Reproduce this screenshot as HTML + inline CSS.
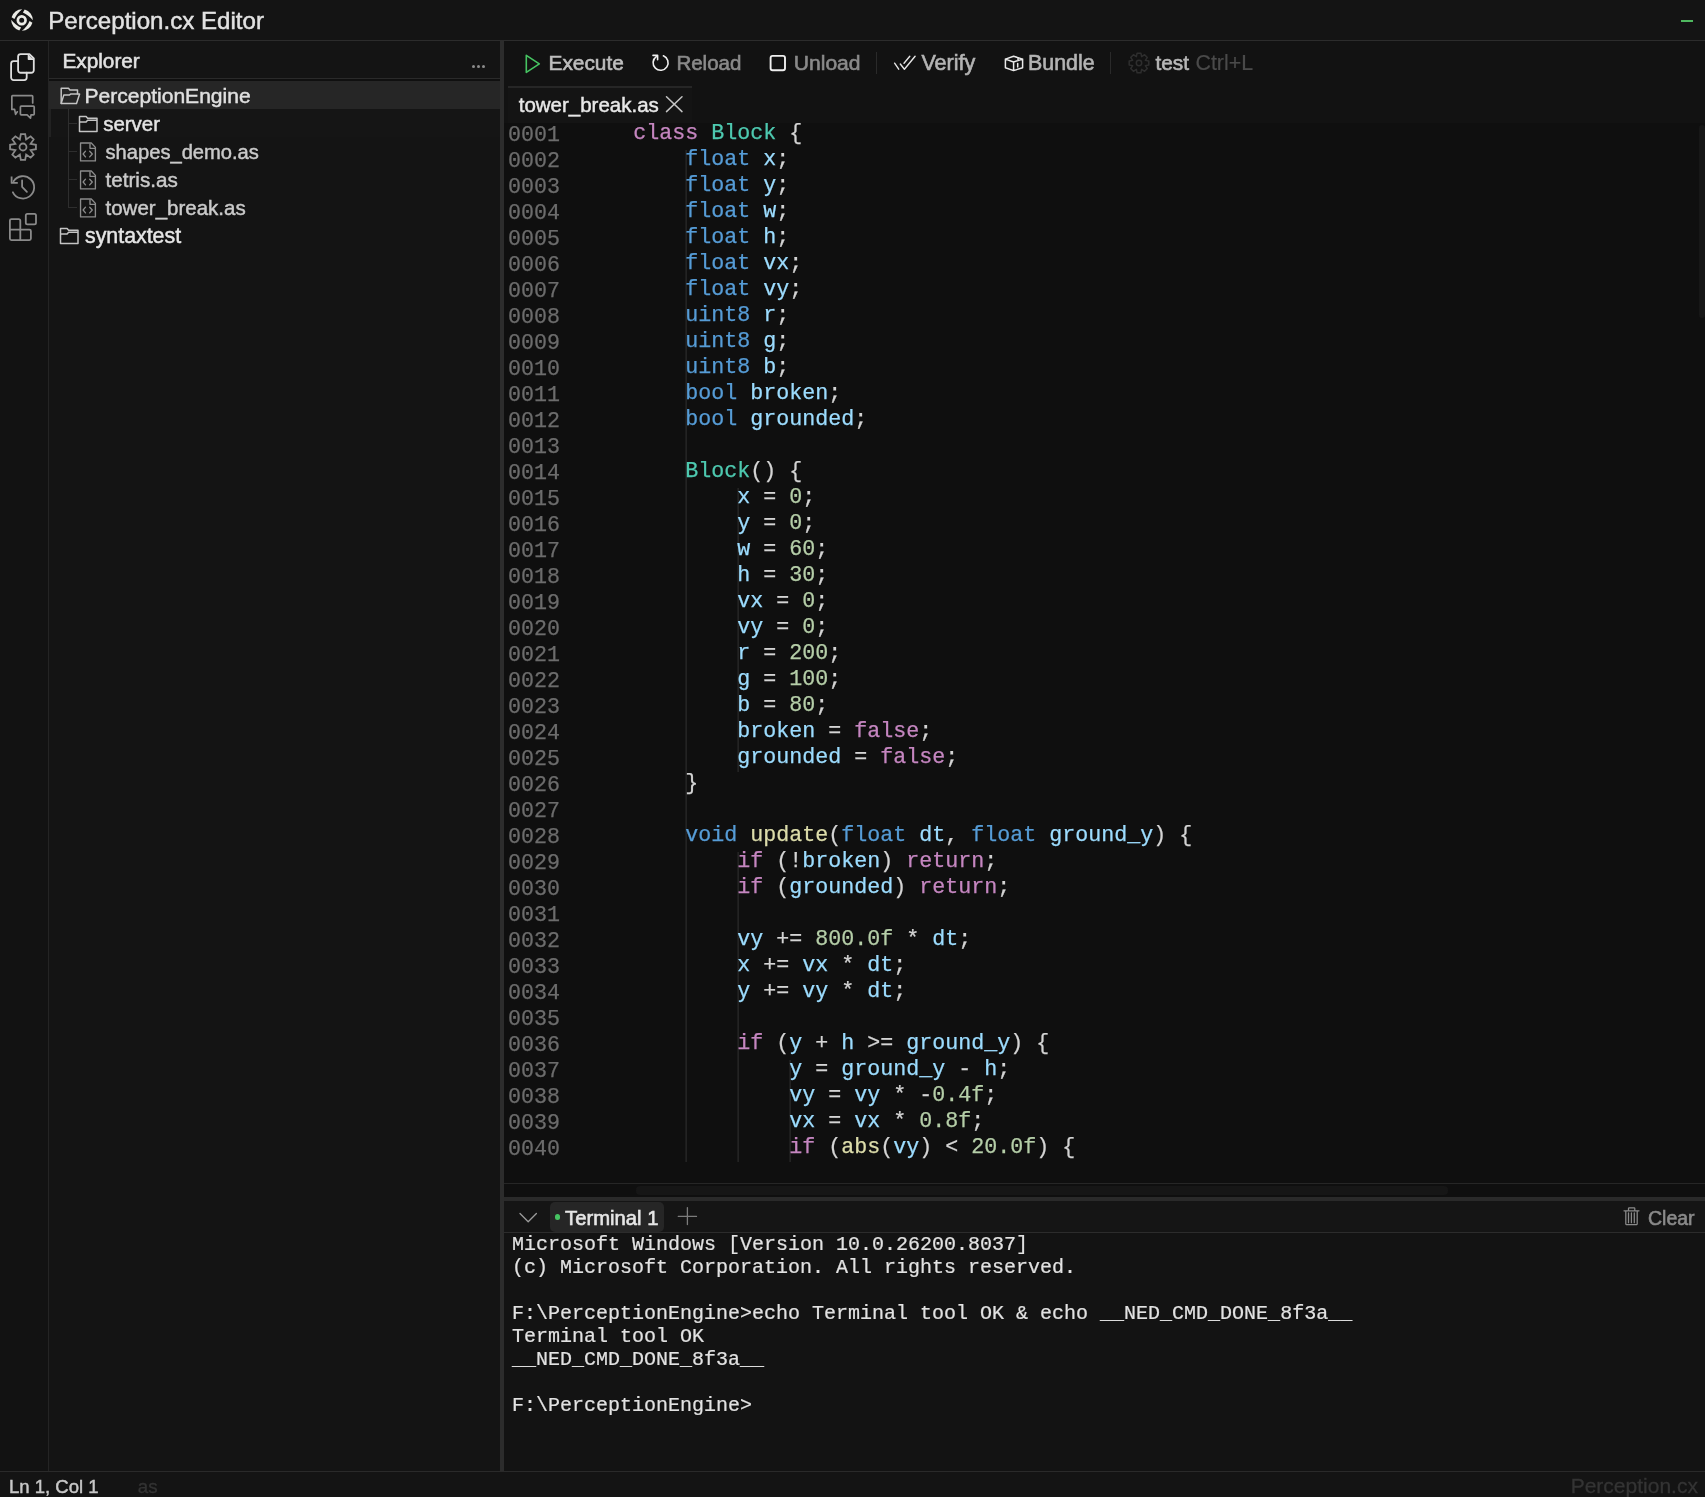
<!DOCTYPE html>
<html><head><meta charset="utf-8">
<style>
*{margin:0;padding:0;box-sizing:border-box}
html,body{width:1705px;height:1497px;overflow:hidden;background:#141414;font-family:"Liberation Sans",sans-serif;-webkit-font-smoothing:antialiased}
#root{position:absolute;left:0;top:0;width:1705px;height:1497px;will-change:transform}
.abs{position:absolute}
.ui{white-space:pre;font-family:"Liberation Sans",sans-serif}
svg{overflow:visible}
.mono{font-family:"Liberation Mono",monospace;font-size:21.67px;line-height:26px;-webkit-text-stroke:0.25px}
.row{position:absolute;left:508px;white-space:pre;height:26px}
.lnum{color:#6c6c6c;white-space:pre}
.k{color:#c586c0}.t{color:#569cd6}.c{color:#4ec9b0}.v{color:#9cdcfe}.n{color:#b5cea8}.p{color:#d4d4d4}.f{color:#dcdcaa}
.term{font-family:"Liberation Mono",monospace;font-size:20px;line-height:23px;color:#e2e2e2;white-space:pre;-webkit-text-stroke:0.2px}
</style></head><body>
<div id="root">
<div class="abs" style="left:0px;top:0px;width:1705px;height:40px;background:#141414;"></div>
<div class="abs" style="left:0px;top:40px;width:1705px;height:1px;background:#2c2c2c;"></div>
<div class="abs" style="left:0px;top:41px;width:48px;height:1430px;background:#121212;"></div>
<div class="abs" style="left:48px;top:41px;width:1px;height:1430px;background:#242424;"></div>
<div class="abs" style="left:500px;top:41px;width:4px;height:1430px;background:#2c2c2c;"></div>
<div class="abs" style="left:504px;top:41px;width:1201px;height:82px;background:#121212;"></div>
<div class="abs" style="left:504px;top:1233px;width:1201px;height:238px;background:#131313;"></div>
<div class="abs" style="left:49px;top:78px;width:451px;height:1px;background:#2a2a2a;"></div>
<div class="abs" style="left:49px;top:79px;width:451px;height:2px;background:#101010;"></div>
<div class="abs" style="left:49px;top:81px;width:451px;height:28px;background:#262626;"></div>
<div class="abs" style="left:51px;top:109px;width:449px;height:28px;background:#151515;"></div>
<div class="abs" style="left:49px;top:109px;width:2px;height:28px;background:#222222;"></div>
<svg class="abs" style="left:11px;top:8.5px" width="22" height="22" viewBox="-11 -11 22 22"><path d="M-10.4 -2.7 A10.8 10.8 0 0 1 0.2 -10.8 Q-5.2 -6.6 -7.6 -0.9 Z" transform="rotate(0)" fill="#ebebe6"/><path d="M-10.4 -2.7 A10.8 10.8 0 0 1 0.2 -10.8 Q-5.2 -6.6 -7.6 -0.9 Z" transform="rotate(90)" fill="#ebebe6"/><path d="M-10.4 -2.7 A10.8 10.8 0 0 1 0.2 -10.8 Q-5.2 -6.6 -7.6 -0.9 Z" transform="rotate(180)" fill="#ebebe6"/><path d="M-10.4 -2.7 A10.8 10.8 0 0 1 0.2 -10.8 Q-5.2 -6.6 -7.6 -0.9 Z" transform="rotate(270)" fill="#ebebe6"/><circle cx="-0.3" cy="0.2" r="3.85" fill="none" stroke="#ebebe6" stroke-width="2.7"/></svg>
<div class="abs ui" style="left:48.30px;top:5.00px;font-size:24.1px;line-height:31px;color:#e2e2e2;-webkit-text-stroke:0.45px #e2e2e2">Perception.cx Editor</div>
<div class="abs" style="left:1681px;top:20px;width:12px;height:2px;background:#4fb85f;"></div>
<svg class="abs" style="left:5px;top:48px" width="36" height="38" viewBox="0 0 36 38" fill="none" stroke-linecap="round" stroke-linejoin="round"><path d="M13.1 13.1 H8.6 A2.5 2.5 0 0 0 6.1 15.6 V29.6 A2.5 2.5 0 0 0 8.6 32.1 H19.2 A2.5 2.5 0 0 0 21.7 29.6 V24.75" stroke="#dedede" stroke-width="1.8"/>
<path d="M15.6 6.1 H24.4 L28.8 10.5 V22.25 A2.5 2.5 0 0 1 26.3 24.75 H15.6 A2.5 2.5 0 0 1 13.1 22.25 V8.6 A2.5 2.5 0 0 1 15.6 6.1 Z" stroke="#dedede" stroke-width="1.8"/>
<path d="M23.5 6.8 V11.3 H28" fill="#dedede" stroke="#dedede" stroke-width="1.6"/></svg>
<svg class="abs" style="left:5px;top:89px" width="36" height="36" viewBox="0 0 36 36" fill="none" stroke-linecap="round" stroke-linejoin="round"><path d="M27.7 13.9 V7.5 A0.8 0.8 0 0 0 26.9 6.7 H7.6 A0.8 0.8 0 0 0 6.85 7.5 V20.4 H9.6 L10.6 25.3 L12.3 22.8" stroke="#8a8a8a" stroke-width="1.7"/>
<path d="M16.2 17.2 H28.4 A0.8 0.8 0 0 1 29.2 18 V25.1 A0.8 0.8 0 0 1 28.4 25.9 H26 L25.5 29.1 L22.1 25.9 H16.2 A0.8 0.8 0 0 1 15.4 25.1 V18 A0.8 0.8 0 0 1 16.2 17.2 Z" stroke="#8a8a8a" stroke-width="1.7"/></svg>
<svg class="abs" style="left:5px;top:128px" width="36" height="36" viewBox="0 0 36 36" fill="none" stroke-linecap="round" stroke-linejoin="round"><path d="M15.84 6.08 L20.16 6.08 L21.14 11.42 L25.61 8.34 L28.66 11.39 L25.58 15.86 L30.92 16.84 L30.92 21.16 L25.58 22.14 L28.66 26.61 L25.61 29.66 L21.14 26.58 L20.16 31.92 L15.84 31.92 L14.86 26.58 L10.39 29.66 L7.34 26.61 L10.42 22.14 L5.08 21.16 L5.08 16.84 L10.42 15.86 L7.34 11.39 L10.39 8.34 L14.86 11.42 Z" stroke="#8a8a8a" stroke-width="1.8" stroke-linejoin="miter"/>
<circle cx="18" cy="19" r="3.5" stroke="#8a8a8a" stroke-width="1.8"/></svg>
<svg class="abs" style="left:5px;top:169px" width="36" height="36" viewBox="0 0 36 36" fill="none" stroke-linecap="round" stroke-linejoin="round"><path d="M7.9 23.3 A11.2 11.2 0 1 0 8.6 12.2" stroke="#8a8a8a" stroke-width="1.8"/>
<path d="M6.6 7.5 V13.9 H12.8" stroke="#8a8a8a" stroke-width="1.8" stroke-linecap="butt"/>
<path d="M17.1 11.3 V17.8 L21.9 22.8" stroke="#8a8a8a" stroke-width="1.8"/></svg>
<svg class="abs" style="left:5px;top:209px" width="36" height="36" viewBox="0 0 36 36" fill="none" stroke-linecap="round" stroke-linejoin="round"><path d="M6.4 10.1 H13.8 A1.5 1.5 0 0 1 15.3 11.6 V20.6 H24.4 A1.5 1.5 0 0 1 25.9 22.1 V29.6 A1.5 1.5 0 0 1 24.4 31.1 H6.4 A1.5 1.5 0 0 1 4.9 29.6 V11.6 A1.5 1.5 0 0 1 6.4 10.1 Z M4.9 20.6 H15.3 V31.1" stroke="#8a8a8a" stroke-width="1.8"/>
<rect x="20.8" y="4.9" width="10.2" height="10.4" rx="1.6" stroke="#8a8a8a" stroke-width="1.8"/></svg>
<div class="abs ui" style="left:62.50px;top:47.00px;font-size:20.75px;line-height:27px;color:#e2e2e2;-webkit-text-stroke:0.55px #e2e2e2">Explorer</div>
<div class="abs" style="left:471.9px;top:65.1px;width:3.2px;height:3.2px;border-radius:50%;background:#8c8c8c"></div>
<div class="abs" style="left:476.9px;top:65.1px;width:3.2px;height:3.2px;border-radius:50%;background:#8c8c8c"></div>
<div class="abs" style="left:481.9px;top:65.1px;width:3.2px;height:3.2px;border-radius:50%;background:#8c8c8c"></div>
<svg class="abs" style="left:56px;top:84px" width="28" height="24" viewBox="0 0 28 24" fill="none" stroke-linecap="round" stroke-linejoin="round"><path d="M5.2 19.4 V4.3 H12.5 L13.9 5.9 H21.5 V9.8" stroke="#c4c4c4" stroke-width="1.5"/><path d="M5.2 19.4 H20.5 L23.6 10.1 H14.6 L13.2 11.1 H7.8 Z" stroke="#c4c4c4" stroke-width="1.5"/></svg>
<div class="abs ui" style="left:84.50px;top:82.00px;font-size:21.05px;line-height:27px;color:#e0e0e0;-webkit-text-stroke:0.45px #e0e0e0">PerceptionEngine</div>
<div class="abs" style="left:68px;top:109px;width:1px;height:99px;background:#2e2e2e;"></div>
<div class="abs" style="left:69px;top:123px;width:8px;height:1px;background:#2e2e2e;"></div>
<div class="abs" style="left:69px;top:151px;width:8px;height:1px;background:#2e2e2e;"></div>
<div class="abs" style="left:69px;top:179px;width:8px;height:1px;background:#2e2e2e;"></div>
<div class="abs" style="left:69px;top:207px;width:8px;height:1px;background:#2e2e2e;"></div>
<svg class="abs" style="left:77.8px;top:115px" width="22" height="19" viewBox="0 0 22 19" fill="none" stroke-linecap="round" stroke-linejoin="round"><path d="M1.5 1.5 H8.1 L9.6 3.3 H19 V16.4 H1.5 Z M1.5 6.9 H8.1 L9.6 5.3 H19" stroke="#c4c4c4" stroke-width="1.5"/></svg>
<div class="abs ui" style="left:103.20px;top:110.00px;font-size:20.45px;line-height:27px;color:#e4e4e4;-webkit-text-stroke:0.45px #e4e4e4">server</div>
<svg class="abs" style="left:74px;top:138px" width="28" height="28" viewBox="0 0 28 28" fill="none" stroke-linecap="round" stroke-linejoin="round"><path d="M6.55 5 H17.3 L21.4 9.4 V22.9 H6.55 Z" stroke="#8c8c8c" stroke-width="1.35"/><path d="M16 5.9 V10.3 H21.1" stroke="#8c8c8c" stroke-width="1.35"/>
<path d="M11.5 13.2 L9.1 16 L11.5 18.9 M15.7 13.2 L18.3 16 L15.7 18.9" stroke="#8c8c8c" stroke-width="1.3"/></svg>
<div class="abs ui" style="left:105.50px;top:139.00px;font-size:20.15px;line-height:26px;color:#cacaca;-webkit-text-stroke:0.45px #cacaca">shapes_demo.as</div>
<svg class="abs" style="left:74px;top:166px" width="28" height="28" viewBox="0 0 28 28" fill="none" stroke-linecap="round" stroke-linejoin="round"><path d="M6.55 5 H17.3 L21.4 9.4 V22.9 H6.55 Z" stroke="#8c8c8c" stroke-width="1.35"/><path d="M16 5.9 V10.3 H21.1" stroke="#8c8c8c" stroke-width="1.35"/>
<path d="M11.5 13.2 L9.1 16 L11.5 18.9 M15.7 13.2 L18.3 16 L15.7 18.9" stroke="#8c8c8c" stroke-width="1.3"/></svg>
<div class="abs ui" style="left:105.50px;top:166.00px;font-size:20.65px;line-height:27px;color:#cacaca;-webkit-text-stroke:0.45px #cacaca">tetris.as</div>
<svg class="abs" style="left:74px;top:194px" width="28" height="28" viewBox="0 0 28 28" fill="none" stroke-linecap="round" stroke-linejoin="round"><path d="M6.55 5 H17.3 L21.4 9.4 V22.9 H6.55 Z" stroke="#8c8c8c" stroke-width="1.35"/><path d="M16 5.9 V10.3 H21.1" stroke="#8c8c8c" stroke-width="1.35"/>
<path d="M11.5 13.2 L9.1 16 L11.5 18.9 M15.7 13.2 L18.3 16 L15.7 18.9" stroke="#8c8c8c" stroke-width="1.3"/></svg>
<div class="abs ui" style="left:105.50px;top:194.00px;font-size:20.5px;line-height:27px;color:#cacaca;-webkit-text-stroke:0.45px #cacaca">tower_break.as</div>
<svg class="abs" style="left:59.3px;top:227px" width="22" height="19" viewBox="0 0 22 19" fill="none" stroke-linecap="round" stroke-linejoin="round"><path d="M1.5 1.5 H8.1 L9.6 3.3 H19 V16.4 H1.5 Z M1.5 6.9 H8.1 L9.6 5.3 H19" stroke="#c4c4c4" stroke-width="1.5"/></svg>
<div class="abs ui" style="left:85.00px;top:222.00px;font-size:21.35px;line-height:28px;color:#e6e6e6;-webkit-text-stroke:0.45px #e6e6e6">syntaxtest</div>
<svg class="abs" style="left:520px;top:50px" width="24" height="26" viewBox="0 0 24 26" fill="none" stroke-linecap="round" stroke-linejoin="round"><path d="M6.3 5.3 L19.3 13.9 L6.3 22.4 Z" stroke="#46c462" stroke-width="1.6"/></svg>
<div class="abs ui" style="left:548.50px;top:49.00px;font-size:20.85px;line-height:27px;color:#bebebe;-webkit-text-stroke:0.6px #bebebe">Execute</div>
<svg class="abs" style="left:646px;top:48px" width="30" height="30" viewBox="0 0 30 30" fill="none" stroke-linecap="round" stroke-linejoin="round"><path d="M17.4 7.8 A7.5 7.5 0 1 1 10.3 8.6" stroke="#f0f0f0" stroke-width="1.6"/><path d="M7 7.4 H11.6 V11.8" stroke="#f0f0f0" stroke-width="1.6"/></svg>
<div class="abs ui" style="left:676.40px;top:49.20px;font-size:20.5px;line-height:27px;color:#8a8a8a;-webkit-text-stroke:0.6px #8a8a8a">Reload</div>
<svg class="abs" style="left:765px;top:50px" width="26" height="26" viewBox="0 0 26 26" fill="none" stroke-linecap="round" stroke-linejoin="round"><rect x="5.6" y="5.9" width="14.4" height="14.3" rx="2" stroke="#efefef" stroke-width="1.9"/></svg>
<div class="abs ui" style="left:793.80px;top:49.20px;font-size:21.05px;line-height:27px;color:#8a8a8a;-webkit-text-stroke:0.6px #8a8a8a">Unload</div>
<div class="abs" style="left:876px;top:52px;width:1px;height:22px;background:#2a2a2a;"></div>
<svg class="abs" style="left:888px;top:48px" width="34" height="30" viewBox="0 0 34 30" fill="none" stroke-linecap="round" stroke-linejoin="round"><path d="M6.6 15.2 L10.7 21.2 M16 15.2 L21.8 8.2" stroke="#e6e6e6" stroke-width="1.4"/><path d="M12.3 16 L16.4 21.2 L27.1 8.2" stroke="#e6e6e6" stroke-width="1.4"/></svg>
<div class="abs ui" style="left:921.40px;top:49.20px;font-size:21.6px;line-height:28px;color:#b4b4b4;-webkit-text-stroke:0.6px #b4b4b4">Verify</div>
<svg class="abs" style="left:1000px;top:50px" width="28" height="26" viewBox="0 0 28 26" fill="none" stroke-linecap="round" stroke-linejoin="round"><path d="M5.4 5.1 L13.6 2.2 L22.6 5.1 V13.7 L13.6 16.6 L5.4 13.7 Z M5.4 5.1 L13.6 8 L22.6 5.1 M13.6 8 V16.6 M18 3.7 V6.6 M17.7 9.6 V12.9" stroke="#eaeaea" stroke-width="1.5" transform="translate(0,4)"/></svg>
<div class="abs ui" style="left:1028.00px;top:49.20px;font-size:21.4px;line-height:28px;color:#b4b4b4;-webkit-text-stroke:0.6px #b4b4b4">Bundle</div>
<div class="abs" style="left:1110px;top:52px;width:1px;height:22px;background:#2a2a2a;"></div>
<svg class="abs" style="left:1120px;top:46px" width="40" height="34" viewBox="0 0 40 34" fill="none" stroke-linecap="round" stroke-linejoin="round"><path d="M17.09 7.18 L20.91 7.18 L21.64 10.63 L24.59 8.71 L27.29 11.41 L25.37 14.36 L28.82 15.09 L28.82 18.91 L25.37 19.64 L27.29 22.59 L24.59 25.29 L21.64 23.37 L20.91 26.82 L17.09 26.82 L16.36 23.37 L13.41 25.29 L10.71 22.59 L12.63 19.64 L9.18 18.91 L9.18 15.09 L12.63 14.36 L10.71 11.41 L13.41 8.71 L16.36 10.63 Z" stroke="#2e2e2e" stroke-width="1.5"/><circle cx="19" cy="17" r="2.7" stroke="#2e2e2e" stroke-width="1.5"/></svg>
<div class="abs ui" style="left:1155.40px;top:49.20px;font-size:20.8px;line-height:27px;color:#b8b8b8;-webkit-text-stroke:0.6px #b8b8b8">test</div>
<div class="abs ui" style="left:1195.50px;top:49.20px;font-size:21.35px;line-height:28px;color:#4a4a4a;-webkit-text-stroke:0.2px #4a4a4a">Ctrl+L</div>
<div class="abs" style="left:508px;top:86px;width:184px;height:2px;background:#262626;"></div>
<div class="abs" style="left:508px;top:88px;width:184px;height:35px;background:#141414;"></div>
<div class="abs ui" style="left:518.70px;top:90.60px;font-size:20.5px;line-height:27px;color:#e8e8e8;-webkit-text-stroke:0.45px #e8e8e8">tower_break.as</div>
<svg class="abs" style="left:660px;top:90px" width="28" height="28" viewBox="0 0 28 28" fill="none" stroke-linecap="round" stroke-linejoin="round"><path d="M6.5 6.8 L22 21.6 M22 6.8 L6.5 21.6" stroke="#c4c4c4" stroke-width="1.5"/></svg>
<div class="abs" style="left:504px;top:123px;width:1201px;height:1060px;background:#0f0f0f;"></div>
<div class="abs" style="left:1699px;top:125px;width:6px;height:193px;background:#171717;border-radius:3px"></div>
<div class="abs" style="left:685px;top:150px;width:1px;height:1012px;background:#1c1c1c;"></div>
<div class="abs" style="left:686px;top:150px;width:1px;height:1012px;background:#232323;"></div>
<div class="abs" style="left:737px;top:488px;width:1px;height:284px;background:#1c1c1c;"></div>
<div class="abs" style="left:738px;top:488px;width:1px;height:284px;background:#232323;"></div>
<div class="abs" style="left:737px;top:852px;width:1px;height:310px;background:#1c1c1c;"></div>
<div class="abs" style="left:738px;top:852px;width:1px;height:310px;background:#232323;"></div>
<div class="abs" style="left:789px;top:1060px;width:1px;height:102px;background:#1c1c1c;"></div>
<div class="abs" style="left:790px;top:1060px;width:1px;height:102px;background:#232323;"></div>
<div class="abs mono lnum" style="left:508px;top:123.40px">0001
0002
0003
0004
0005
0006
0007
0008
0009
0010
0011
0012
0013
0014
0015
0016
0017
0018
0019
0020
0021
0022
0023
0024
0025
0026
0027
0028
0029
0030
0031
0032
0033
0034
0035
0036
0037
0038
0039
0040</div>
<div class="abs mono" style="left:633.3px;top:120.90px;white-space:pre"><span class="k">class</span><span class="p"> </span><span class="c">Block</span><span class="p"> </span><span class="p">{</span>
    <span class="t">float</span><span class="p"> </span><span class="v">x</span><span class="p">;</span>
    <span class="t">float</span><span class="p"> </span><span class="v">y</span><span class="p">;</span>
    <span class="t">float</span><span class="p"> </span><span class="v">w</span><span class="p">;</span>
    <span class="t">float</span><span class="p"> </span><span class="v">h</span><span class="p">;</span>
    <span class="t">float</span><span class="p"> </span><span class="v">vx</span><span class="p">;</span>
    <span class="t">float</span><span class="p"> </span><span class="v">vy</span><span class="p">;</span>
    <span class="t">uint8</span><span class="p"> </span><span class="v">r</span><span class="p">;</span>
    <span class="t">uint8</span><span class="p"> </span><span class="v">g</span><span class="p">;</span>
    <span class="t">uint8</span><span class="p"> </span><span class="v">b</span><span class="p">;</span>
    <span class="t">bool</span><span class="p"> </span><span class="v">broken</span><span class="p">;</span>
    <span class="t">bool</span><span class="p"> </span><span class="v">grounded</span><span class="p">;</span>

    <span class="c">Block</span><span class="p">() {</span>
        <span class="v">x</span><span class="p"> = </span><span class="n">0</span><span class="p">;</span>
        <span class="v">y</span><span class="p"> = </span><span class="n">0</span><span class="p">;</span>
        <span class="v">w</span><span class="p"> = </span><span class="n">60</span><span class="p">;</span>
        <span class="v">h</span><span class="p"> = </span><span class="n">30</span><span class="p">;</span>
        <span class="v">vx</span><span class="p"> = </span><span class="n">0</span><span class="p">;</span>
        <span class="v">vy</span><span class="p"> = </span><span class="n">0</span><span class="p">;</span>
        <span class="v">r</span><span class="p"> = </span><span class="n">200</span><span class="p">;</span>
        <span class="v">g</span><span class="p"> = </span><span class="n">100</span><span class="p">;</span>
        <span class="v">b</span><span class="p"> = </span><span class="n">80</span><span class="p">;</span>
        <span class="v">broken</span><span class="p"> = </span><span class="k">false</span><span class="p">;</span>
        <span class="v">grounded</span><span class="p"> = </span><span class="k">false</span><span class="p">;</span>
    <span class="p">}</span>

    <span class="t">void</span><span class="p"> </span><span class="f">update</span><span class="p">(</span><span class="t">float</span><span class="p"> </span><span class="v">dt</span><span class="p">, </span><span class="t">float</span><span class="p"> </span><span class="v">ground_y</span><span class="p">) {</span>
        <span class="k">if</span><span class="p"> (!</span><span class="v">broken</span><span class="p">) </span><span class="k">return</span><span class="p">;</span>
        <span class="k">if</span><span class="p"> (</span><span class="v">grounded</span><span class="p">) </span><span class="k">return</span><span class="p">;</span>

        <span class="v">vy</span><span class="p"> += </span><span class="n">800.0f</span><span class="p"> * </span><span class="v">dt</span><span class="p">;</span>
        <span class="v">x</span><span class="p"> += </span><span class="v">vx</span><span class="p"> * </span><span class="v">dt</span><span class="p">;</span>
        <span class="v">y</span><span class="p"> += </span><span class="v">vy</span><span class="p"> * </span><span class="v">dt</span><span class="p">;</span>

        <span class="k">if</span><span class="p"> (</span><span class="v">y</span><span class="p"> + </span><span class="v">h</span><span class="p"> &gt;= </span><span class="v">ground_y</span><span class="p">) {</span>
            <span class="v">y</span><span class="p"> = </span><span class="v">ground_y</span><span class="p"> - </span><span class="v">h</span><span class="p">;</span>
            <span class="v">vy</span><span class="p"> = </span><span class="v">vy</span><span class="p"> * -</span><span class="n">0.4f</span><span class="p">;</span>
            <span class="v">vx</span><span class="p"> = </span><span class="v">vx</span><span class="p"> * </span><span class="n">0.8f</span><span class="p">;</span>
            <span class="k">if</span><span class="p"> (</span><span class="f">abs</span><span class="p">(</span><span class="v">vy</span><span class="p">) &lt; </span><span class="n">20.0f</span><span class="p">) {</span></div>
<div class="abs" style="left:504px;top:1183px;width:1201px;height:1px;background:#262626;"></div>
<div class="abs" style="left:504px;top:1184px;width:1201px;height:13px;background:#0f0f0f;"></div>
<div class="abs" style="left:636px;top:1186px;width:812px;height:9px;background:#161616;border-radius:4px"></div>
<div class="abs" style="left:504px;top:1197px;width:1201px;height:4px;background:#2a2a2a;"></div>
<div class="abs" style="left:504px;top:1201px;width:1201px;height:31px;background:#151515;"></div>
<div class="abs" style="left:504px;top:1232px;width:1201px;height:1px;background:#2c2c2c;"></div>
<svg class="abs" style="left:510px;top:1200px" width="36" height="30" viewBox="0 0 36 30" fill="none" stroke-linecap="round" stroke-linejoin="round"><path d="M10 13.5 L18.2 21.7 L26.4 13.5" stroke="#9c9c9c" stroke-width="1.3"/></svg>
<div class="abs" style="left:550px;top:1202px;width:114px;height:29.5px;background:#262626;border-radius:5px"></div>
<div class="abs" style="left:554.9px;top:1214.4px;width:5.2px;height:5.2px;border-radius:50%;background:#46c462"></div>
<div class="abs ui" style="left:565.10px;top:1204.90px;font-size:20.25px;line-height:26px;color:#e6e6e6;-webkit-text-stroke:0.6px #e6e6e6">Terminal 1</div>
<svg class="abs" style="left:670px;top:1200px" width="34" height="30" viewBox="0 0 34 30" fill="none" stroke-linecap="round" stroke-linejoin="round"><path d="M17.4 7.6 V24.6 M8.3 16.4 H26.5" stroke="#7c7c7c" stroke-width="1.3"/></svg>
<svg class="abs" style="left:1615px;top:1200px" width="30" height="30" viewBox="0 0 30 30" fill="none" stroke-linecap="round" stroke-linejoin="round"><path d="M9 10.8 H24 M13.5 10.4 V8.6 A0.7 0.7 0 0 1 14.2 7.9 H19.1 A0.7 0.7 0 0 1 19.8 8.6 V10.4 M10.8 11.4 V24 A0.5 0.5 0 0 0 11.3 24.5 H21.7 A0.5 0.5 0 0 0 22.2 24 V11.4 M13.5 12.9 V22.7 M16.4 12.9 V22.7 M19.3 12.9 V22.7" stroke="#8a8a8a" stroke-width="1.25"/></svg>
<div class="abs ui" style="left:1648.00px;top:1205.80px;font-size:19.5px;line-height:25px;color:#8a8a8a;-webkit-text-stroke:0.6px #8a8a8a">Clear</div>
<div class="abs term" style="left:512px;top:1233.2px">Microsoft Windows [Version 10.0.26200.8037]
(c) Microsoft Corporation. All rights reserved.

F:\PerceptionEngine&gt;echo Terminal tool OK &amp; echo __NED_CMD_DONE_8f3a__
Terminal tool OK
__NED_CMD_DONE_8f3a__

F:\PerceptionEngine&gt;</div>
<div class="abs" style="left:0px;top:1471px;width:1705px;height:1px;background:#2a2a2a;"></div>
<div class="abs ui" style="left:9.00px;top:1474.80px;font-size:18.55px;line-height:24px;color:#c8c8c8;-webkit-text-stroke:0.45px #c8c8c8">Ln 1, Col 1</div>
<div class="abs ui" style="left:137.80px;top:1475.00px;font-size:18.75px;line-height:24px;color:#333333;-webkit-text-stroke:0.3px #333333">as</div>
<div class="abs ui" style="left:1570.70px;top:1472.00px;font-size:21.0px;line-height:27px;color:#343434;-webkit-text-stroke:0.3px #343434">Perception.cx</div>
</div>
</body></html>
